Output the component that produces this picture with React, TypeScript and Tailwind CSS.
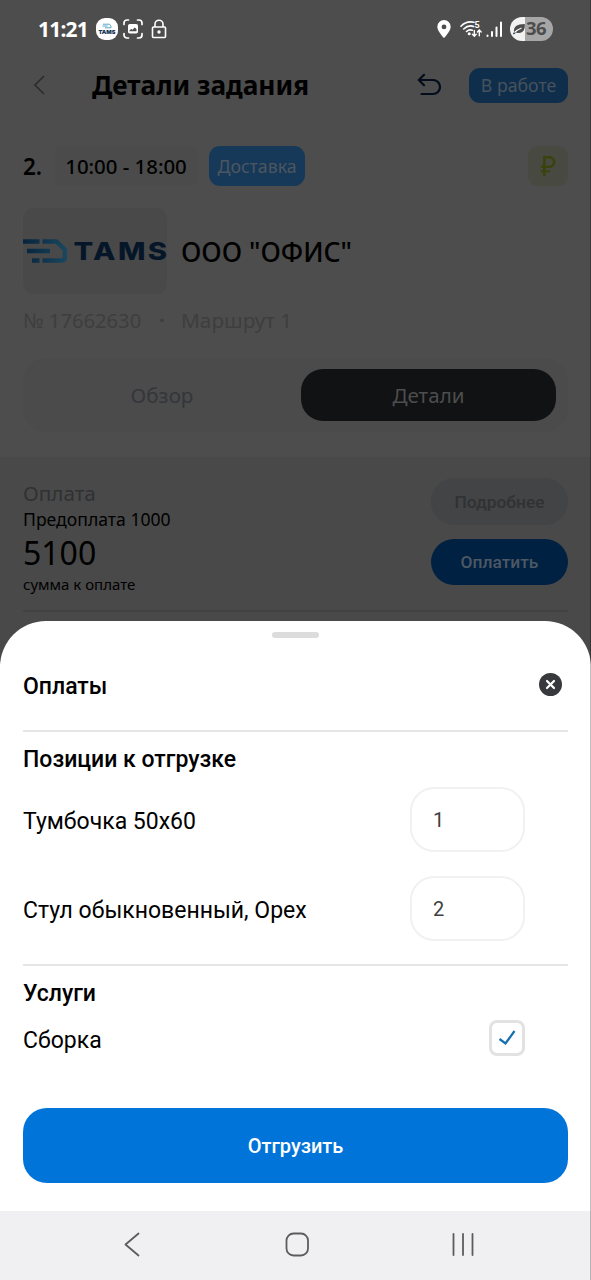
import { useState } from 'react';

interface ShipItem {
  id: number;
  name: string;
  count: string;
}

const initialItems: ShipItem[] = [
  { id: 1, name: 'Тумбочка 50x60', count: '1' },
  { id: 2, name: 'Стул обыкновенный, Орех', count: '2' },
];

function StatusBar() {
  return (
    <div className="flex h-[57px] shrink-0 items-center justify-between pl-[38px] pr-[38px] text-white">
      <div className="flex items-center">
        <span className="w-[58px] whitespace-nowrap pt-px text-[21px] font-bold leading-none tracking-[-0.8px]">11:21</span>
        <svg className="block" width="22" height="22" viewBox="0 0 22 22">
          <rect width="22" height="22" rx="9" fill="#fff" />
          <path d="M7 6.2h6.5l1.5 2v1.6H9M6.5 8h5" fill="none" stroke="#5ba8cc" strokeWidth="1" />
          <text x="11" y="16.2" textAnchor="middle" fontSize="5.4" fontWeight="900" fontFamily="Inter, sans-serif" fill="#10304f" textLength="17" lengthAdjust="spacingAndGlyphs">TAMS</text>
        </svg>
        <svg className="ml-[5px] block" width="20" height="20" viewBox="0 0 20 20" fill="none" stroke="#fff" strokeWidth="1.7" strokeLinecap="round">
          <path d="M1 5.5V4a3 3 0 0 1 3-3h1.5M14.5 1H16a3 3 0 0 1 3 3v1.5M19 14.5V16a3 3 0 0 1-3 3h-1.5M5.5 19H4a3 3 0 0 1-3-3v-1.5" />
          <rect x="5" y="5" width="10" height="9.5" rx="1.8" fill="#fff" stroke="none" />
          <path d="M6.5 12.2v-1l1.8-1.3 1.2.8 2.2-2.3 1.8 1.6v2.2z" fill="#4d4d4d" stroke="none" />
        </svg>
        <svg className="ml-[8px] block" width="16" height="20" viewBox="0 0 16 20" fill="none" stroke="#fff" strokeWidth="1.6">
          <rect x="1.5" y="8" width="13" height="10.5" rx="1" />
          <path d="M4 8V5.2a4 4 0 0 1 8 0V8" />
          <circle cx="8" cy="13" r="1.7" fill="#fff" stroke="none" />
        </svg>
      </div>
      <div className="flex items-center">
        <svg className="block" width="14" height="18" viewBox="0 0 14 18">
          <path fillRule="evenodd" d="M7 0a6.7 6.7 0 0 0-6.7 6.7C.3 11.2 7 18 7 18s6.7-6.8 6.7-11.3A6.7 6.7 0 0 0 7 0zm0 4.5a2.4 2.4 0 1 1 0 4.8 2.4 2.4 0 0 1 0-4.8z" fill="#fff" />
        </svg>
        <svg className="ml-[9px] block" width="23" height="18" viewBox="0 0 23 18" fill="none" stroke="#fff" strokeWidth="1.6" strokeLinecap="round">
          <path d="M1 6.2C4.5 2.5 9 1.2 14 2.3M3.7 9c3-3 6.8-3.7 10-2.6M6.5 11.5c1.8-1.7 3.8-1.9 5.8-1.2" />
          <circle cx="9.2" cy="13.7" r="1.5" fill="#fff" stroke="none" />
          <path d="M14.3 10.5V16M12.4 14.2l1.9 2 1.9-2M19.3 15.8v-5.5M17.4 12.1l1.9-2 1.9 2" strokeWidth="1.4" />
          <text x="14.5" y="8" fontSize="9" fontWeight="700" fontFamily="Roboto, sans-serif" fill="#fff" stroke="none">5</text>
        </svg>
        <svg className="ml-[3px] block" width="17" height="18" viewBox="0 0 17 18" stroke="#fff" strokeWidth="2" strokeLinecap="round">
          <path d="M1.5 15.5v.5M6 12V16M10.5 7.5V16M15 2.5V16" />
        </svg>
        <div className="ml-[7px] flex h-[24px] w-[43px] items-center overflow-hidden rounded-full bg-[linear-gradient(90deg,#f2f2f2_35%,#a6a6a6_35%)]">
          <svg className="ml-[2px] block shrink-0" width="14" height="14" viewBox="0 0 14 14">
            <path d="M2 9.8C1.5 5 4.5 2 12.8 2c.4 5.5-1.6 9-5.8 9-1 0-1.9-.2-2.6-.6L1.8 12.5.8 11.6 2 10.2z" fill="#4d4d4d" />
            <path d="M2.5 10.5C5 8 7 7 9.5 6" stroke="#f2f2f2" strokeWidth="1.1" fill="none" />
          </svg>
          <span className="text-[18.5px] font-bold leading-none tracking-[-0.5px] text-[#4d4d4d]">36</span>
        </div>
      </div>
    </div>
  );
}

function TamsLogo() {
  return (
    <svg className="block overflow-visible" width="144" height="28" viewBox="0 0 144 28">
      <defs>
        <linearGradient id="mark" x1="0" y1="0" x2="44" y2="0" gradientUnits="userSpaceOnUse">
          <stop offset="0" stopColor="#08233c" />
          <stop offset="1" stopColor="#194860" />
        </linearGradient>
      </defs>
      <g fill="none" stroke="url(#mark)" strokeWidth="4.4" strokeLinejoin="round">
        <path d="M0 4.5h16.5M19.500 4.510H33.500L41.800 12.500v8q0 3-3 3H19.500M4 14.010h23M9 23.510h7.500" />
      </g>
      <text x="50.5" y="22.5" fontSize="24.5" fontWeight="800" fontFamily="Inter, sans-serif" fill="#061629" textLength="96" lengthAdjust="spacingAndGlyphs" letterSpacing="2">TAMS</text>
    </svg>
  );
}

function TaskHeader() {
  return (
    <div className="flex h-[56px] shrink-0 items-center pl-[33px] pr-[23px]">
      <svg className="block" width="12" height="20" viewBox="0 0 12 20" fill="none" stroke="#2b2b2b" strokeWidth="1.6">
        <path d="M11 1 2 10l9 9" />
      </svg>
      <h1 className="ml-[47px] whitespace-nowrap text-[26.2px] font-bold leading-none text-black">Детали задания</h1>
      <svg className="ml-auto block" width="24" height="24" viewBox="0 0 24 24" fill="none" stroke="#030d1b" strokeWidth="2.2" strokeLinecap="round" strokeLinejoin="round">
        <path d="M7 1.8 1.8 7 7 12.2M2 7h14a7 7 0 0 1 0 14H4.5" />
      </svg>
      <span className="ml-[28px] flex h-[35px] w-[99px] items-center justify-center whitespace-nowrap rounded-[11px] bg-[#0e2e4b] pt-[2px] text-[17.7px] leading-none text-[#47525c]">
        В работе
      </span>
    </div>
  );
}

function TaskDetails() {
  return (
    <div className="flex h-[664px] flex-col bg-[#4d4d4d] font-['Noto_Sans',sans-serif]">
      <StatusBar />
      <TaskHeader />
      <div className="mt-[33px] flex h-[40px] shrink-0 items-center px-[23px]">
        <span className="w-[31px] pt-[2px] text-[22.5px] font-semibold leading-none text-black">2.</span>
        <span className="flex h-full w-[144px] items-center justify-center whitespace-nowrap rounded-[9px] bg-[#4b4b4b] text-[20.4px] font-medium leading-none text-black">
          10:00 - 18:00
        </span>
        <span className="ml-[11px] flex h-full w-[96px] items-center justify-center whitespace-nowrap rounded-[11px] bg-[#16395a] pt-[2px] text-[17.7px] leading-none text-[#4d565e]">
          Доставка
        </span>
        <span className="ml-auto flex size-[40px] items-center justify-center rounded-[10px] bg-[#484a41]">
          <svg className="block" width="16" height="22" viewBox="0 0 16 22" fill="none" stroke="#3a430b" strokeWidth="2.6">
            <path d="M4.3 21V2.3h5.2a4.7 4.7 0 0 1 0 9.4H1" />
            <path d="M1 16.3h9" strokeWidth="2" />
          </svg>
        </span>
      </div>
      <div className="mt-[22px] flex h-[86px] shrink-0 items-center pl-[23px]">
        <div className="flex h-full w-[144px] items-center rounded-[11px] bg-[#494949]">
          <TamsLogo />
        </div>
        <span className="ml-[14px] whitespace-nowrap pt-[2px] text-[26.6px] font-medium leading-none text-black">ООО "ОФИС"</span>
      </div>
      <div className="mt-[13px] flex h-[26px] shrink-0 items-center pl-[23px] leading-none text-[#3e3e3e]">
        <span className="w-[136px] whitespace-nowrap text-[20.2px]">№ 17662630</span>
        <span className="w-[22px] text-[20px] font-bold">·</span>
        <span className="whitespace-nowrap text-[20.8px]">Маршрут 1</span>
      </div>
      <div className="mx-[23px] mt-[25px] flex h-[74px] shrink-0 items-center rounded-[24px] bg-[#4b4b4b] pr-[12px] text-[20.6px] leading-none">
        <span className="flex flex-1 items-center justify-center text-[#33363a]">Обзор</span>
        <span className="flex h-[52px] w-[255px] items-center justify-center rounded-[22px] bg-[#111213] text-[#4d4d4d]">Детали</span>
      </div>
      <div className="mt-[25px] flex-1 bg-[#494949] px-[23px] pt-[21px]">
        <div className="flex h-[134px] justify-between border-b-2 border-[#424242]">
          <div className="flex flex-col items-start whitespace-nowrap text-black">
            <span className="h-[29px] text-[20.7px] leading-[30px] text-[#303133]">Оплата</span>
            <span className="h-[24px] text-[17.6px] leading-[24px]">Предоплата 1000</span>
            <span className="h-[44px] text-[32px] leading-[44px]">5100</span>
            <span className="h-[20px] text-[15px] leading-[18px]">сумма к оплате</span>
          </div>
          <div className="flex flex-col gap-[14px] font-[Roboto,sans-serif] text-[17.4px] font-medium leading-none">
            <span className="flex h-[47px] w-[137px] items-center justify-center rounded-full bg-[#434446] pt-[2px] text-[#303235]">Подробнее</span>
            <span className="flex h-[46px] w-[137px] items-center justify-center rounded-full bg-[#002142] pt-px text-[#4d5864]">Оплатить</span>
          </div>
        </div>
      </div>
    </div>
  );
}

function PaymentSheet() {
  const [items, setItems] = useState(initialItems);
  const [assembly, setAssembly] = useState(true);

  const updateCount = (id: number, count: string) => {
    setItems(prev => prev.map(item => (item.id === id ? { ...item, count } : item)));
  };

  return (
    <div className="relative -mt-[43px] flex h-[590px] flex-col rounded-t-[46px] bg-white px-[23px] text-[23px] leading-none text-black">
      <div className="mx-auto mt-[11px] h-[6px] w-[47px] shrink-0 rounded-[3px] bg-[#dcdcdc]" />
      <div className="flex h-[94px] shrink-0 items-center justify-between border-b-2 border-[#e6e6e6] pr-[6px]">
        <h2 className="pt-[4px] font-medium">Оплаты</h2>
        <button type="button" aria-label="Закрыть">
          <svg className="block" width="23" height="23" viewBox="0 0 23 23">
            <circle cx="11.5" cy="11.5" r="11.5" fill="#37393c" />
            <path d="m8 8 7 7m0-7-7 7" stroke="#fff" strokeWidth="2.2" strokeLinecap="round" />
          </svg>
        </button>
      </div>
      <div className="flex h-[234px] shrink-0 flex-col border-b-2 border-[#e6e6e6] pt-[14px]">
        <h3 className="h-[41px] shrink-0 font-medium leading-[27px]">Позиции к отгрузке</h3>
        <div className="flex flex-col gap-[24px] pr-[43px]">
          {items.map(item => (
            <div key={item.id} className="flex h-[65px] items-center justify-between">
              <span className="whitespace-nowrap pt-[4px]">{item.name}</span>
              <input
                value={item.count}
                onChange={e => updateCount(item.id, e.target.value)}
                className="h-[65px] w-[115px] rounded-[24px] border-2 border-[#f1f1f1] bg-white pl-[21px] text-[20px] text-[#404040] outline-none"
              />
            </div>
          ))}
        </div>
      </div>
      <h3 className="mt-[14px] h-[27px] shrink-0 font-medium leading-[27px]">Услуги</h3>
      <div className="mt-[13px] flex h-[36px] shrink-0 items-center justify-between pr-[43px]">
        <span className="pt-[5px]">Сборка</span>
        <button
          type="button"
          aria-label="Сборка"
          onClick={() => setAssembly(!assembly)}
          className="flex size-[36px] items-center justify-center rounded-[8px] border-[3px] border-[#e2e2e2]"
        >
          {assembly && (
            <svg className="block" width="18" height="16" viewBox="0 0 18 16" fill="none" stroke="#1570b3" strokeWidth="2.2">
              <path d="m1.5 9 6 4.5L16.5 1" />
            </svg>
          )}
        </button>
      </div>
      <button type="button" className="mt-[52px] h-[75px] w-full shrink-0 rounded-[24px] bg-[#0074d9] text-[20px] font-medium text-white">
        Отгрузить
      </button>
    </div>
  );
}

function NavigationBar() {
  return (
    <div className="flex h-[69px] shrink-0 bg-[#f0f0f2]">
      <svg className="block" width="591" height="69" viewBox="0 0 591 69" fill="none" stroke="#5c5c60" strokeWidth="1.8" strokeLinecap="round" strokeLinejoin="round">
        <path d="m138.500 22.500-13 11 13 11" />
        <rect x="286.5" y="22.5" width="21.5" height="22" rx="7" />
        <path d="M453.500 23v21M463 23v21M472.500 23v21" />
      </svg>
    </div>
  );
}

export default function App() {
  return (
    <div className="relative flex h-[1280px] w-[591px] flex-col overflow-hidden bg-white font-[Roboto,sans-serif]">
      <TaskDetails />
      <PaymentSheet />
      <NavigationBar />
      <div className="absolute inset-y-0 right-0 w-px bg-black/25" />
    </div>
  );
}
